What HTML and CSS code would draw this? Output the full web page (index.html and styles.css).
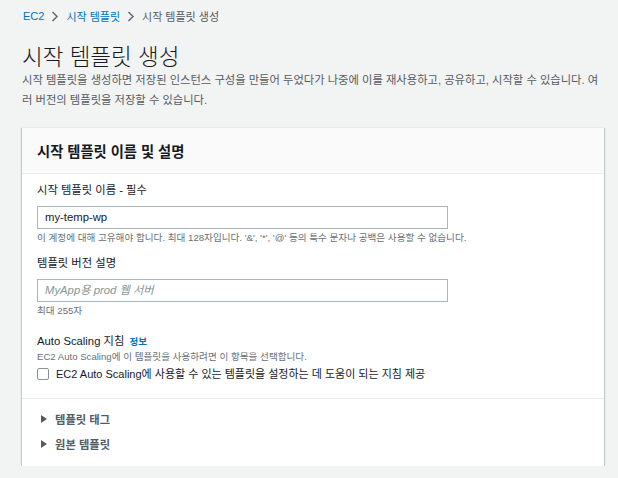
FILE: index.html
```html
<!DOCTYPE html>
<html lang="ko">
<head>
<meta charset="utf-8">
<link rel="stylesheet" href="styles.css">
</head>
<body>
<div class="page">
  <nav class="crumbs">
    <a class="crumb-link">EC2</a>
    <svg class="chev" width="8" height="11" viewBox="0 0 8 11"><path d="M1.5 1 L6 5.5 L1.5 10" fill="none" stroke="#687078" stroke-width="1.6"/></svg>
    <a class="crumb-link">시작 템플릿</a>
    <svg class="chev" width="8" height="11" viewBox="0 0 8 11"><path d="M1.5 1 L6 5.5 L1.5 10" fill="none" stroke="#687078" stroke-width="1.6"/></svg>
    <span class="crumb-cur">시작 템플릿 생성</span>
  </nav>
  <h1 class="title">시작 템플릿 생성</h1>
  <p class="desc">시작 템플릿을 생성하면 저장된 인스턴스 구성을 만들어 두었다가 나중에 이를 재사용하고, 공유하고, 시작할 수 있습니다. 여러 버전의 템플릿을 저장할 수 있습니다.</p>

  <section class="card">
    <header class="card-head">시작 템플릿 이름 및 설명</header>
    <div class="card-body">
      <div class="field">
        <div class="label">시작 템플릿 이름 - 필수</div>
        <div class="input">my-temp-wp</div>
        <div class="hint">이 계정에 대해 고유해야 합니다. 최대 128자입니다. '&amp;', '*', '@' 등의 특수 문자나 공백은 사용할 수 없습니다.</div>
      </div>
      <div class="field">
        <div class="label">템플릿 버전 설명</div>
        <div class="input placeholder">MyApp용 prod 웹 서버</div>
        <div class="hint">최대 255자</div>
      </div>
      <div class="field gap-lg">
        <div class="label">Auto Scaling 지침 <span class="info">정보</span></div>
        <div class="hint flush">EC2 Auto Scaling에 이 템플릿을 사용하려면 이 항목을 선택합니다.</div>
        <label class="check"><span class="box"></span><span>EC2 Auto Scaling에 사용할 수 있는 템플릿을 설정하는 데 도움이 되는 지침 제공</span></label>
      </div>
    </div>
    <div class="card-foot">
      <div class="expander"><span class="tri"></span>템플릿 태그</div>
      <div class="expander"><span class="tri"></span>원본 템플릿</div>
    </div>
  </section>
</div>
</body>
</html>
```

FILE: styles.css
```css
html, body {
  margin: 0;
  padding: 0;
  background: #f2f3f3;
}
body {
  font-family: "Liberation Sans", "Noto Sans CJK KR", sans-serif;
  font-size: 11.3px;
  color: #16191f;
}
.page {
  padding: 7px 14px 0 22px;
}
.crumbs {
  display: flex;
  align-items: center;
  gap: 7px;
  font-size: 11px;
  height: 18px;
  padding-left: 1px;
}
.crumb-link {
  color: #0073bb;
}
.crumb-cur {
  color: #545b64;
}
.chev {
  display: block;
}
.title {
  margin: 21px 0 0 0;
  font-size: 22.5px;
  font-weight: 300;
  line-height: 24px;
  color: #16191f;
}
.desc {
  margin: 0;
  font-size: 11.3px;
  line-height: 20px;
  color: #545b64;
}
.card {
  margin-top: 17px;
  background: #fff;
  border-top: 1px solid #eaeded;
  box-shadow: 0 1px 1px 0 rgba(0,28,36,.3), 1px 1px 1px 0 rgba(0,28,36,.15), -1px 1px 1px 0 rgba(0,28,36,.15);
}
.card-head {
  background: #fafafa;
  border-bottom: 1px solid #eaeded;
  height: 45px;
  padding: 0 15px;
  display: flex;
  align-items: center;
  font-size: 14.3px;
  font-weight: 700;
  color: #16191f;
}
.card-body {
  padding: 8px 15px 15px 15px;
  border-bottom: 1px solid #eaeded;
}
.field + .field {
  margin-top: 10px;
}
.field.gap-lg {
  margin-top: 15px;
}
.label {
  font-size: 11.3px;
  line-height: 16px;
  color: #16191f;
  margin-bottom: 8px;
}
.info {
  color: #0073bb;
  font-weight: 700;
  font-size: 9.5px;
  margin-left: 2px;
}
.input {
  width: 411px;
  height: 23px;
  box-sizing: border-box;
  border: 1px solid #aab7b8;
  padding: 0 7px;
  font-size: 11.3px;
  line-height: 21px;
  color: #16191f;
}
.placeholder {
  font-style: italic;
  color: #879596;
}
.hint {
  font-size: 9.6px;
  line-height: 14px;
  color: #687078;
  margin-top: 2px;
}
.field .label + .hint.flush {
  margin-top: -8px;
}
.check {
  display: flex;
  align-items: center;
  gap: 7px;
  margin-top: 1px;
  font-size: 11px;
  line-height: 18px;
  color: #16191f;
}
.box {
  width: 10px;
  height: 10px;
  border: 1px solid #879596;
  border-radius: 2px;
  background: #fff;
}
.card-foot {
  padding: 7px 15px 10px 15px;
}
.expander {
  display: flex;
  align-items: center;
  height: 25px;
  font-size: 11.3px;
  color: #545b64;
  font-weight: 700;
}
.tri {
  width: 0;
  height: 0;
  border-left: 6px solid #545b64;
  border-top: 4px solid transparent;
  border-bottom: 4px solid transparent;
  margin-left: 4px;
  margin-right: 8px;
}
```
